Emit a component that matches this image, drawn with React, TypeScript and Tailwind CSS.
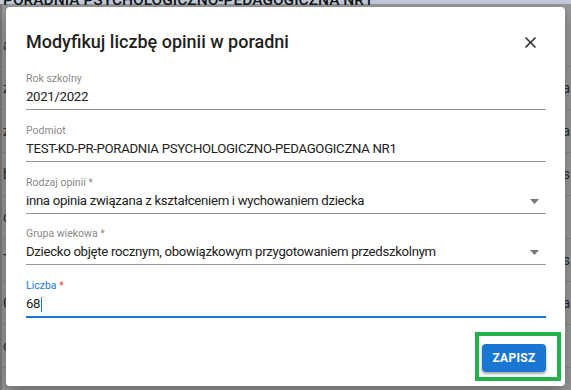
import React from "react";

type FieldProps = {
  label: string;
  value: string;
  required?: boolean;
  select?: boolean;
  focused?: boolean;
};

const Field = ({ label, value, required, select, focused }: FieldProps) => {
  return (
    <div className="flex shrink-0 flex-col">
      <div
        className={`h-[12px] text-[10.5px] leading-[12px] ${
          focused ? "text-[#1976d2]" : "text-[#8a8a8a]"
        }`}
      >
        {label}
        {required && (
          <span className={focused ? "text-[#f44336]" : ""}> *</span>
        )}
      </div>
      <div
        className={`mt-[2px] flex items-start justify-between pr-[4px] ${
          focused
            ? "h-[24px] border-b-2 border-[#1976d2]"
            : "h-[23px] border-b border-[#949494]"
        }`}
      >
        <span className="flex h-[20px] items-center text-[13.2px] leading-[20px] tracking-[-0.3px] text-[#212121]">
          {value}
          {focused && <span className="ml-[1px] inline-block h-[15px] w-px bg-[#1976d2]" />}
        </span>
        {select && (
          <svg width="9" height="5" viewBox="0 0 9 5" className="mr-[3px] mt-[8px]">
            <path d="M0 0h9L4.5 5z" fill="#777" />
          </svg>
        )}
      </div>
    </div>
  );
};

const BgRow = ({ left, right }: { left: string; right: string }) => (
  <div className="flex h-[43px] shrink-0 items-center justify-between border-b border-[#888] px-[1px] text-[14px] text-[#2a2a2a]">
    <span>{left}</span>
    <span className="pl-[2px]">{right}</span>
  </div>
);

export default function App() {
  return (
    <div
      className="relative h-[390px] w-[571px] overflow-hidden bg-[#989898]"
      style={{ fontFamily: "Roboto, 'Noto Sans', sans-serif" }}
    >
      {/* page behind the dialog */}
      <div className="h-[4px] bg-[#c2ccdc]" />
      <div className="relative -top-[13px] h-0 whitespace-nowrap pl-[3px] text-[15.5px] font-medium leading-[18px] text-[#151515]">
        PORADNIA PSYCHOLOGICZNO-PEDAGOGICZNA NR1
      </div>
      <div className="flex h-[386px]">
        <div className="w-[2px] bg-[#7b7b7b]" />
        <div className="flex flex-1 flex-col pt-[20px]">
          <BgRow left="a" right="" />
          <BgRow left="z" right="wa" />
          <BgRow left="z" right="ta" />
          <BgRow left="b" right="s" />
          <BgRow left="c" right="" />
          <BgRow left="T" right="s" />
          <BgRow left="C" right="wa" />
          <BgRow left="c" right="" />
        </div>
      </div>

      {/* dialog */}
      <div className="absolute left-[6px] top-[7px] flex h-[379px] w-[559px] flex-col rounded-[4px] bg-white pl-[20px] pr-[19px] shadow-[0_8px_20px_rgba(0,0,0,0.3)]">
        <div className="flex h-[66px] shrink-0 items-center justify-between pt-[4px]">
          <h2 className="text-[18px] font-medium leading-[22px] text-[#1f1f1f]">
            Modyfikuj liczbę opinii w poradni
          </h2>
          <svg width="19" height="19" viewBox="0 0 24 24" className="mr-[6px]">
            <path
              d="M19 6.41L17.59 5 12 10.59 6.41 5 5 6.41 10.59 12 5 17.59 6.41 19 12 13.41 17.59 19 19 17.59 13.41 12z"
              fill="#2b2b2b"
            />
          </svg>
        </div>
        <div className="flex shrink-0 flex-col gap-[14.75px]">
          <Field label="Rok szkolny" value="2021/2022" />
          <Field
            label="Podmiot"
            value="TEST-KD-PR-PORADNIA PSYCHOLOGICZNO-PEDAGOGICZNA NR1"
          />
          <Field
            label="Rodzaj opinii"
            required
            select
            value="inna opinia związana z kształceniem i wychowaniem dziecka"
          />
          <Field
            label="Grupa wiekowa"
            required
            select
            value="Dziecko objęte rocznym, obowiązkowym przygotowaniem przedszkolnym"
          />
          <Field label="Liczba" required focused value="68" />
        </div>
        <div className="mt-[14px] flex shrink-0 justify-end">
          <div className="relative -mr-[15px] border-4 border-[#22b14c] pb-[5px] pl-[3px] pr-[11px] pt-[8px]">
            <button className="flex h-[28px] w-[64px] items-center justify-center rounded-[4px] bg-[#1976d2] text-[12px] font-bold tracking-[0.3px] text-white shadow-[0_2px_3px_rgba(0,0,0,0.35)]">
              ZAPISZ
            </button>
          </div>
        </div>
      </div>
    </div>
  );
}
